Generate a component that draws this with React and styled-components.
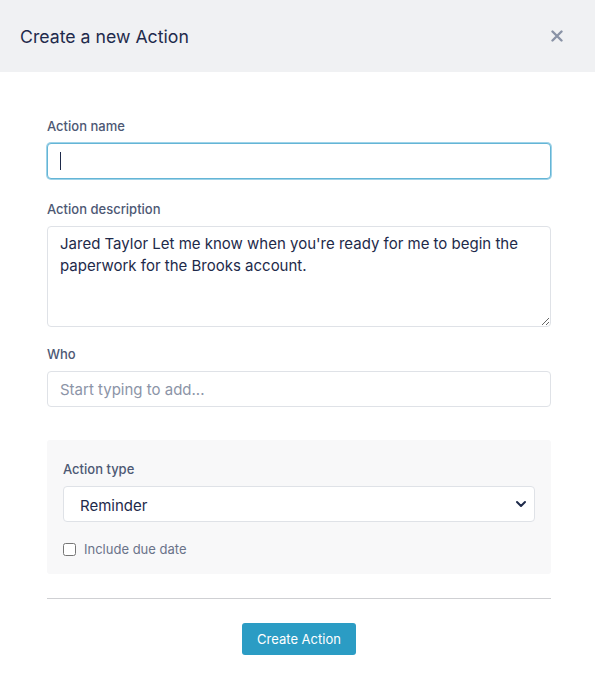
import styled, { createGlobalStyle } from 'styled-components';

const GlobalStyle = createGlobalStyle`
	body {
		margin: 0;
		background: #ffffff;
		font-family: Inter, 'Noto Sans', sans-serif;
		color: #1e2a4a;
	}
`;

const Modal = styled.div`
	width: 595px;
	min-height: 692px;
	background: #fff;
`;

const Header = styled.div`
	height: 72px;
	background: #f0f1f3;
	display: flex;
	align-items: center;
	justify-content: space-between;
	padding: 0 32px 0 20px;
	box-sizing: border-box;
`;

const Title = styled.h1`
	margin: 0;
	font-size: 17.7px;
	font-weight: 400;
	color: #1f2b4c;
`;

const CloseButton = styled.button`
	border: none;
	background: transparent;
	padding: 0;
	display: flex;
	cursor: pointer;
`;

const Body = styled.div`
	padding: 45px 44px 0 47px;
`;

const Field = styled.div`
	display: flex;
	flex-direction: column;
	margin-bottom: ${(p) => (p.$space === undefined ? 21 : p.$space)}px;
`;

const Label = styled.label`
	font-size: 13px;
	font-weight: 500;
	line-height: 18px;
	color: #4d5874;
	margin-bottom: 8px;
`;

const Input = styled.input`
	height: 36px;
	box-sizing: border-box;
	border: 1px solid ${(p) => (p.$focused ? '#64b5d6' : '#dfe2e7')};
	box-shadow: ${(p) => (p.$focused ? '0 0 0 1px #9fd3e8' : 'none')};
	border-radius: 4px;
	padding: 0 12px;
	font-family: inherit;
	font-size: 15px;
	color: #1e2a4a;
	outline: none;
	&::placeholder {
		color: #8c94a7;
	}
`;

const Caret = styled.span`
	position: absolute;
	left: 13px;
	top: 9px;
	width: 1px;
	height: 18px;
	background: #1e2a4a;
`;

const InputWrap = styled.div`
	position: relative;
	display: flex;
	flex-direction: column;
`;

const Textarea = styled.textarea`
	display: block;
	height: 101px;
	box-sizing: border-box;
	border: 1px solid #dfe2e7;
	border-radius: 4px;
	padding: 6px 12px;
	font-family: inherit;
	font-size: 15px;
	line-height: 22px;
	color: #1e2a4a;
	resize: vertical;
	outline: none;
`;

const Panel = styled.div`
	background: #f8f8f9;
	border-radius: 3px;
	padding: 20px 16px 17px;
`;

const SelectWrap = styled.div`
	position: relative;
`;

const Select = styled.select`
	width: 100%;
	height: 36px;
	appearance: none;
	background: #fff;
	border: 1px solid #dfe2e7;
	border-radius: 4px;
	padding: 2px 16px 0;
	font-family: inherit;
	font-size: 15px;
	color: #1e2a4a;
	outline: none;
`;

const Chevron = styled.svg`
	position: absolute;
	right: 8px;
	top: 14px;
	pointer-events: none;
`;

const CheckRow = styled.label`
	display: flex;
	align-items: center;
	gap: 8px;
	margin-top: 19px;
	font-size: 13px;
	color: #6a7389;
`;

const Checkbox = styled.input`
	margin: 0;
	width: 13px;
	height: 13px;
`;

const Divider = styled.hr`
	border: none;
	border-top: 1px solid #cfd0d3;
	margin: 24px 0 24px;
`;

const Footer = styled.div`
	display: flex;
	justify-content: center;
`;

const Button = styled.button`
	height: 32px;
	padding: 0 15px;
	background: #2b9cc4;
	color: #fff;
	border: none;
	border-radius: 3px;
	font-family: inherit;
	font-size: 13px;
	cursor: pointer;
`;

function App() {
	return (
		<>
			<GlobalStyle />
			<Modal>
				<Header>
					<Title>Create a new Action</Title>
					<CloseButton aria-label="Close">
						<svg width="12" height="12" viewBox="0 0 12 12">
							<path
								d="M1.5 1.5 L10.5 10.5 M10.5 1.5 L1.5 10.5"
								stroke="#8a93a6"
								strokeWidth="2.4"
								strokeLinecap="round"
							/>
						</svg>
					</CloseButton>
				</Header>
				<Body>
					<Field>
						<Label>Action name</Label>
						<InputWrap>
							<Input $focused />
							<Caret />
						</InputWrap>
					</Field>
					<Field $space={18}>
						<Label>Action description</Label>
						<Textarea
							defaultValue="Jared Taylor Let me know when you're ready for me to begin the paperwork for the Brooks account."
						/>
					</Field>
					<Field $space={33}>
						<Label>Who</Label>
						<Input placeholder="Start typing to add..." />
					</Field>
					<Panel>
						<Field $space={0}>
							<Label>Action type</Label>
							<SelectWrap>
								<Select defaultValue="reminder">
									<option value="reminder">Reminder</option>
									<option value="task">Task</option>
								</Select>
								<Chevron width="12" height="8" viewBox="0 0 12 8">
									<path
										d="M2 2 L6 6 L10 2"
										fill="none"
										stroke="#1e2a4a"
										strokeWidth="2"
										strokeLinecap="round"
										strokeLinejoin="round"
									/>
								</Chevron>
							</SelectWrap>
						</Field>
						<CheckRow>
							<Checkbox type="checkbox" />
							Include due date
						</CheckRow>
					</Panel>
					<Divider />
					<Footer>
						<Button>Create Action</Button>
					</Footer>
				</Body>
			</Modal>
		</>
	);
}

export default App;
